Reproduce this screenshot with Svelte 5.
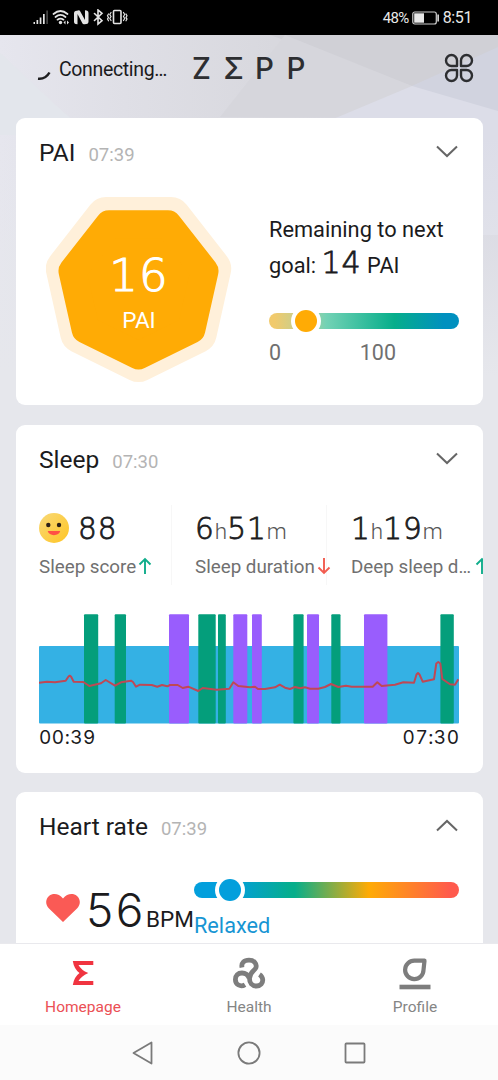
<script>
  const heptagonOuter = '92.5,165 150.8,136.2 165.2,71.7 124.9,20 60.1,20 19.8,71.7 34.2,136.2';
  const heptagonInner = '92.5,158.5 145.4,132.5 158.5,74.1 121.9,27.3 63.1,27.3 26.5,74.1 39.6,132.5';

  // sleep stages above light sleep, in chart units (420 wide)
  const stages = [
    { x: 45, w: 14.2, type: 'deep' },
    { x: 75.7, w: 11.3, type: 'deep' },
    { x: 130, w: 20, type: 'rem' },
    { x: 159.3, w: 17.4, type: 'deep' },
    { x: 179, w: 7.8, type: 'deep' },
    { x: 194.3, w: 14, type: 'rem' },
    { x: 213, w: 9.8, type: 'rem' },
    { x: 254.4, w: 10.2, type: 'deep' },
    { x: 268, w: 12, type: 'rem' },
    { x: 292.3, w: 9.2, type: 'deep' },
    { x: 325, w: 23.4, type: 'rem' },
    { x: 401.4, w: 13.4, type: 'deep' }
  ];

  const pulse = [
    [0, 68.7], [8, 67.7], [16, 68.3], [26.7, 66.7], [29.5, 62.5], [30.7, 61.7], [32, 62.5], [34.7, 67.7], [44.3, 68],
    [50.3, 72], [62, 69.3], [66.7, 66], [76, 71.7], [82, 68.3], [92, 66.7], [94, 68], [97, 72.7],
    [101, 70.7], [112.7, 71], [118.3, 72.7], [123, 71], [128.3, 72.3], [131, 71], [138.7, 71],
    [143.7, 74], [149.3, 72.7], [159.3, 77], [163.7, 74], [177.7, 75.7], [190.3, 74.7],
    [194.3, 68.3], [199.3, 72], [211, 73.3], [216, 72.7], [219, 75], [226, 75], [236, 73.3],
    [240.7, 70.7], [246, 73.7], [251, 75], [256, 73], [261, 74.3], [266, 73.3], [271, 74.7],
    [279.3, 74.7], [286, 73], [292, 70], [299.3, 73], [307, 71.7], [312.7, 72.7], [333.7, 72.7],
    [338.3, 68.3], [342.7, 72], [356, 70.7], [364.3, 68.3], [375, 68.7], [377.5, 60.5], [379, 59], [380.5, 60.5], [383.7, 67.7],
    [395, 65.3], [397.3, 49.5], [399.3, 48], [401.3, 49.5], [403.3, 65], [411, 70.3],
    [416, 70.7], [419.3, 65.3]
  ];
  const pulseLine = pulse.map((p) => p.join(',')).join(' ');
</script>

<div class="phone">
  <div class="status">
    <svg class="status-icons" width="98" height="18" viewBox="0 0 98 18">
      <g fill="#e4e4e4">
        <rect x="0.5" y="13" width="1.500" height="2" />
        <rect x="3.500" y="11" width="1.700" height="4" />
        <rect x="6.700" y="8.500" width="1.700" height="6.500" />
        <rect x="10" y="5" width="1.700" height="10" />
        <rect x="13.400" y="1.500" width="1.400" height="13.500" fill="#555" />
        <circle cx="27.500" cy="13.500" r="1.700" />
        <path d="M30.500 13.500l2-2v4zM36 13.500l-2-2v4z" />
        <path d="M45 1.500l-2.500.500q-1.500.300-1.500 2v9q0 1.700 1.500 2l2 .200V5l5 9.500q.500 1 2 .700 4 0 4-2.500V4q0-2.500-3.500-2.700V11L47 2q-.500-1-2-.500z" />
      </g>
      <g fill="none" stroke="#e4e4e4" stroke-width="1.700" stroke-linecap="round">
        <path d="M20.500 5Q27.500-1 34.500 5M22.500 8Q27.500 3.700 32.500 8M24.500 10.700Q27.500 8.500 30.500 10.700" />
        <path d="M61.500 4.500l7.500 7.200-4 3.300V1l4 3.300L61.500 11.500" stroke-width="1.600" />
        <rect x="80.500" y="1.500" width="7.500" height="13" rx="1" stroke-width="1.600" />
        <path d="M78 3.500l-1.200 2 1.200 2-1.200 2 1.200 2M75.500 5l-1 1.700 1 1.700-1 1.700 1 1.700M90.500 3.500l1.200 2-1.200 2 1.200 2-1.200 2M93 5l1 1.700-1 1.700 1 1.700-1 1.700" stroke-width="1.200" />
      </g>
    </svg>
    <div class="status-right">
      <span class="percent">48%</span>
      <svg width="28" height="14" viewBox="0 0 28 14">
        <rect x="0.800" y="1" width="23.500" height="12" rx="2" fill="none" stroke="#cfcfcf" stroke-width="1.200" />
        <rect x="2.200" y="2.300" width="9.800" height="9.400" fill="#e8e8e8" />
        <rect x="25.300" y="3.500" width="1.700" height="7" fill="#cfcfcf" />
      </svg>
      <span class="clock">8:51</span>
    </div>
  </div>

  <main>
    <svg class="backdrop" width="498" height="340" viewBox="0 0 498 340" preserveAspectRatio="none">
      <defs>
        <linearGradient id="sky" x1="0" x2="1">
          <stop offset="0" stop-color="#e6e6ee" />
          <stop offset="0.250" stop-color="#dfdfe6" />
          <stop offset="0.550" stop-color="#d8d8de" />
          <stop offset="1" stop-color="#d5d5df" />
        </linearGradient>
        <linearGradient id="fade" x1="0" y1="0" x2="0" y2="1">
          <stop offset="0.300" stop-color="#e6e7ec" stop-opacity="0" />
          <stop offset="1" stop-color="#e6e7ec" />
        </linearGradient>
      </defs>
      <rect width="498" height="340" fill="url(#sky)" />
      <polygon points="0,18 58,72 90,100 0,100" fill="#e3e6ec" />
      <polygon points="270,0 498,0 498,14 412,51" fill="#d0d0d6" />
      <polygon points="285,0 412,51 340,82 220,82" fill="#d6d6dc" />
      <polygon points="412,51 498,12 498,80" fill="#d1d3df" />
      <polygon points="412,51 498,76 498,200 200,200 200,140" fill="#dcdde8" />
      <rect width="498" height="340" fill="url(#fade)" />
    </svg>

    <header>
      <svg class="spinner" width="14" height="10" viewBox="0 0 14 10">
        <path d="M1 7.700Q8.500 8.500 12.500 1.500" fill="none" stroke="#1e1e20" stroke-width="2.500" />
      </svg>
      <span class="connecting">Connecting…</span>
      <div class="brand"><span>Z</span><span>Σ</span><span>P</span><span>P</span></div>
      <svg class="apps" width="30" height="30" viewBox="0 0 30 30" fill="none" stroke="#2d2e31" stroke-width="2.400" stroke-linejoin="round">
        <path d="M13 13V7.500A5.500 5.500 0 1 0 7.500 13Z" />
        <path d="M17 13V7.500A5.500 5.500 0 1 1 22.500 13Z" />
        <path d="M13 17V22.500A5.500 5.500 0 1 1 7.500 17Z" />
        <path d="M17 17V22.500A5.500 5.500 0 1 0 22.500 17Z" />
      </svg>
    </header>

    <section class="card pai">
      <div class="card-head">
        <h2>PAI</h2>
        <time>07:39</time>
        <svg class="chevron" width="22" height="13" viewBox="0 0 22 13"><path d="M1 1.500L11 11 21 1.500" /></svg>
      </div>
      <div class="pai-body">
        <div class="badge">
          <svg width="186" height="186" viewBox="0 0 186 186" stroke-linejoin="round">
            <polygon points={heptagonOuter} fill="#fff0da" stroke="#fff0da" stroke-width="40" />
            <polygon points={heptagonInner} fill="#ffab05" stroke="#ffab05" stroke-width="28" />
          </svg>
          <div class="badge-text">
            <strong>16</strong>
            <span>PAI</span>
          </div>
        </div>
        <div class="goal">
          <p>Remaining to next</p>
          <p>goal: <b>14</b> PAI</p>
          <div class="track pai-track"><i class="knob"></i></div>
          <div class="scale"><span>0</span><span>100</span></div>
        </div>
      </div>
    </section>

    <section class="card sleep">
      <div class="card-head">
        <h2>Sleep</h2>
        <time>07:30</time>
        <svg class="chevron" width="22" height="13" viewBox="0 0 22 13"><path d="M1 1.500L11 11 21 1.500" /></svg>
      </div>
      <div class="stats">
        <div class="stat">
          <div class="value">
            <svg class="smiley" width="30" height="30" viewBox="0 0 30 30">
              <defs>
                <linearGradient id="face" x1="0" y1="0" x2="1" y2="1">
                  <stop offset="0" stop-color="#f8d978" />
                  <stop offset="1" stop-color="#ffc524" />
                </linearGradient>
              </defs>
              <circle cx="15" cy="15" r="15" fill="url(#face)" />
              <circle cx="9.300" cy="12" r="2.200" fill="#2c2017" />
              <circle cx="20" cy="12" r="2.200" fill="#2c2017" />
              <path d="M8.700 18h12.500c-1 5.500-11.500 5.500-12.500 0z" fill="#ff5145" />
            </svg>
            <span class="num">88</span>
          </div>
          <div class="label">Sleep score<svg class="arrow" width="14" height="18" viewBox="0 0 14 18" stroke="#10ad8b"><path d="M7 17V2M1.500 7.500L7 2l5.500 5.500" /></svg></div>
        </div>
        <div class="stat">
          <div class="value"><span class="num">6</span><small>h</small><span class="num">51</span><small>m</small></div>
          <div class="label">Sleep duration<svg class="arrow" width="14" height="18" viewBox="0 0 14 18" stroke="#f25c50"><path d="M7 1v15M1.500 10.500L7 16l5.500-5.500" /></svg></div>
        </div>
        <div class="stat">
          <div class="value"><span class="num">1</span><small>h</small><span class="num">19</span><small>m</small></div>
          <div class="label">Deep sleep d…<svg class="arrow gap" width="14" height="18" viewBox="0 0 14 18" stroke="#10ad8b"><path d="M7 17V2M1.500 7.500L7 2l5.500 5.500" /></svg></div>
        </div>
      </div>
      <svg class="chart" width="420" height="110" viewBox="0 0 420 110">
        <rect y="32" width="420" height="77.500" rx="1" fill="#34b1e4" />
        {#each stages as s}
          <rect x={s.x} y="0.300" width={s.w} height="109.200" rx="1" fill={s.type === 'deep' ? '#049e7b' : '#995dfd'} />
        {/each}
        <polyline points={pulseLine} fill="none" stroke="#bf4855" stroke-width="2" stroke-linejoin="round" />
      </svg>
      <div class="range"><span>00:39</span><span>07:30</span></div>
    </section>

    <section class="card heart">
      <div class="card-head">
        <h2>Heart rate</h2>
        <time>07:39</time>
        <svg class="chevron" width="22" height="13" viewBox="0 0 22 13"><path d="M1 11.500L11 2l10 9.500" /></svg>
      </div>
      <div class="heart-body">
        <svg class="heart-icon" width="34" height="28" viewBox="0 0 34 28">
          <path d="M17 28L3 14.500C-1 10.500-.500 5 3 2 7-1.300 13-.500 17 4.500 21-.500 27-1.300 31 2c3.500 3 4 8.500 0 12.500z" fill="#fa5a55" />
        </svg>
        <span class="bpm">56</span><span class="unit">BPM</span>
        <div class="zone">
          <div class="track heart-track"><i class="knob"></i></div>
          <span>Relaxed</span>
        </div>
      </div>
    </section>
  </main>

  <nav class="tabs">
    <div class="tab active">
      <svg width="34" height="34" viewBox="0 0 34 34"><path d="M6.800 5H27.300V9H12.500Q15 14 22.300 17 15 20.500 12.500 25H27.300V29H6.800Q8 21 13.500 17 8 13 6.800 5z" fill="#f03440" /></svg>
      <span>Homepage</span>
    </div>
    <div class="tab">
      <svg width="34" height="34" viewBox="0 0 34 34" fill="none" stroke="#7d7d7d" stroke-width="4.800">
        <path d="M10 11.500C9 7 12 4.200 17 4.200 22 4.200 25 7.500 24 11.500 22.800 15 17.500 16 17.500 22.500 17.500 27 20 30 24.500 30 28.500 30 31 27 30.700 23.500 30.400 21 29 19.500 27.500 18.500" />
        <path d="M13 28.700C8.500 31.500 3.400 28.500 3.400 23.500 3.400 19.500 6 17 10 17 14 17 16 19 17.200 22" />
      </svg>
      <span>Health</span>
    </div>
    <div class="tab">
      <svg width="34" height="34" viewBox="0 0 34 34" fill="none" stroke="#7d7d7d">
        <path d="M26.500 4.700H16.500A9.200 9.200 0 1 0 25.500 14Z" stroke-width="4.200" stroke-linejoin="round" />
        <path d="M1.500 31H32.500" stroke-width="4.600" />
      </svg>
      <span>Profile</span>
    </div>
  </nav>

  <div class="sysnav">
    <svg width="22" height="24" viewBox="0 0 22 24"><path d="M19.500 1.500v21L1.500 12z" /></svg>
    <svg width="24" height="24" viewBox="0 0 24 24"><circle cx="12" cy="12" r="10.600" /></svg>
    <svg width="22" height="22" viewBox="0 0 22 22"><rect x="1.500" y="1.500" width="19" height="19" rx="0.800" /></svg>
  </div>
</div>

<style>
  :global(body) {
    background: #e6e7ec;
  }
  .phone {
    width: 498px;
    height: 1080px;
    display: flex;
    flex-direction: column;
    overflow: hidden;
    font-family: Roboto, sans-serif;
    color: #1b1b1d;
  }
  svg {
    display: block;
    flex: none;
  }
  .status {
    height: 35px;
    flex: none;
    box-sizing: border-box;
    padding: 0 26px 0 33px;
    background: #000;
    color: #e8e8e8;
    display: flex;
    align-items: center;
    justify-content: space-between;
  }
  .status-right {
    display: flex;
    align-items: center;
    gap: 3px;
    font-size: 16px;
    line-height: 18px;
    letter-spacing: -0.4px;
  }
  .percent {
    font-size: 15px;
    letter-spacing: -0.6px;
  }
  main {
    position: relative;
    height: 908px;
    flex: none;
    overflow: hidden;
    background: #e6e7ec;
  }
  .backdrop {
    position: absolute;
    top: 0;
    left: 0;
  }
  header {
    position: relative;
    height: 83px;
    box-sizing: border-box;
    padding: 0 24px 17px 37px;
    display: flex;
    align-items: center;
  }
  .spinner {
    margin-top: 16px;
  }
  .connecting {
    width: 133px;
    margin-left: 8px;
    margin-top: 3px;
    font-size: 19.500px;
    line-height: 24px;
    letter-spacing: -0.350px;
  }
  .brand {
    display: flex;
    font-family: Inter, sans-serif;
    font-weight: 550;
    font-size: 29.500px;
    line-height: 30px;
    color: #2d2e31;
  }
  .brand span {
    width: 31.500px;
  }
  .apps {
    margin-left: auto;
  }
  .card {
    position: relative;
    box-sizing: border-box;
    margin: 0 15.500px 20px;
    padding: 0 23.500px;
    background: #fff;
    border-radius: 9px;
  }
  .card-head {
    display: flex;
    align-items: baseline;
    height: 70px;
    line-height: 70px;
  }
  h2 {
    margin: 0;
    font-size: 24.500px;
    font-weight: 400;
  }
  time {
    margin-left: 13px;
    font-size: 18.500px;
    color: #b4b4b4;
  }
  .chevron {
    margin-left: auto;
    margin-right: 1px;
    align-self: center;
    margin-top: -3px;
    fill: none;
    stroke: #666;
    stroke-width: 2;
  }
  .pai {
    height: 287px;
  }
  .pai-body {
    display: flex;
    padding: 9px 0 0 7px;
  }
  .badge {
    display: grid;
  }
  .badge > * {
    grid-area: 1 / 1;
  }
  .badge-text {
    display: flex;
    flex-direction: column;
    align-items: center;
    padding-top: 54px;
    color: #fff;
  }
  .badge-text strong,
  .goal b,
  .num {
    font-family: "DejaVu Sans", sans-serif;
    font-weight: 200;
    -webkit-text-stroke: 0.800px currentColor;
  }
  .badge-text strong {
    font-size: 45px;
    line-height: 50px;
    letter-spacing: 1px;
    -webkit-text-stroke-width: 1.100px;
  }
  .badge-text span {
    font-size: 22.500px;
    line-height: 38px;
  }
  .goal {
    margin-left: 37px;
    width: 190px;
    padding-top: 15px;
  }
  .goal p {
    margin: 0;
    font-size: 21.800px;
    line-height: 36px;
    white-space: nowrap;
  }
  .goal b {
    font-size: 30px;
    line-height: 30px;
    letter-spacing: 1px;
  }
  .track {
    position: relative;
    height: 16px;
    border-radius: 8px;
  }
  .pai-track {
    margin-top: 29px;
    background: linear-gradient(90deg, #f1ca6c 3%, #bdd096 18%, #73d2b5 30%, #06ae8b 66%, #0090bf 92%);
  }
  .knob {
    position: absolute;
    top: -3px;
    left: 26px;
    width: 22px;
    height: 22px;
    border-radius: 50%;
    background: #ffab05;
    box-shadow: 0 0 0 4px #fff;
  }
  .scale {
    display: flex;
    justify-content: space-between;
    padding-right: 63px;
    margin-top: 12px;
    font-size: 21.500px;
    line-height: 24px;
    color: #707070;
  }
  .sleep {
    height: 348px;
    margin-bottom: 19px;
  }
  .stats {
    display: flex;
    width: 443.500px;
    height: 80px;
    margin-top: 10px;
    overflow: hidden;
  }
  .stat {
    width: 156px;
    flex: none;
    box-sizing: border-box;
    border-right: 1px solid #f7f7f7;
    padding-top: 5px;
  }
  .stat:first-child {
    width: 133px;
    margin-right: 23px;
  }
  .stat:nth-child(2) {
    width: 132px;
    margin-right: 24px;
  }
  .value {
    display: flex;
    align-items: baseline;
    height: 38px;
    line-height: 38px;
    white-space: nowrap;
  }
  .smiley {
    align-self: center;
    margin-right: 9px;
    margin-top: -3px;
  }
  .num {
    font-size: 29.500px;
    letter-spacing: 1px;
  }
  .value small {
    font-size: 22.500px;
    font-weight: 300;
    color: #555;
  }
  .label {
    display: flex;
    align-items: center;
    height: 38px;
    font-size: 18.800px;
    line-height: 24px;
    white-space: nowrap;
    color: #707070;
  }
  .arrow {
    margin-left: 2px;
    margin-top: -3px;
    fill: none;
    stroke-width: 1.900;
  }
  .arrow.gap {
    margin-left: 4px;
  }
  .stat:nth-child(2) .label {
    margin-right: -10px;
  }
  .chart {
    margin-top: 29px;
  }
  .range {
    display: flex;
    justify-content: space-between;
    margin-right: -0.500px;
    font-family: Inter, sans-serif;
    font-size: 19px;
    line-height: 28px;
    letter-spacing: 0.500px;
    font-variant-numeric: tabular-nums;
  }
  .heart {
    height: 200px;
  }
  .heart-body {
    display: flex;
    align-items: flex-start;
    padding: 20px 0 0 7px;
  }
  .heart-icon {
    margin-top: 12px;
  }
  .bpm {
    margin-left: 6px;
    font-family: Inter, sans-serif;
    font-weight: 300;
    font-size: 46px;
    line-height: 56px;
    letter-spacing: 2.500px;
  }
  .unit {
    font-size: 22.500px;
    line-height: 74px;
  }
  .zone {
    width: 265px;
    margin-left: auto;
  }
  .heart-track {
    background: linear-gradient(90deg, #039fdc 15%, #06ae8b 37%, #06ae8b 38%, #ffab05 66%, #ff5a4d 97%);
  }
  .heart-track .knob {
    left: 25px;
    background: #039fdc;
  }
  .zone span {
    display: block;
    margin-top: 15px;
    font-size: 21.700px;
    line-height: 26px;
    color: #1795d3;
  }
  .tabs {
    display: flex;
    height: 82px;
    flex: none;
    box-sizing: border-box;
    border-top: 1px solid #e9e9ed;
    background: #fff;
  }
  .tab {
    flex: 1;
    display: flex;
    flex-direction: column;
    align-items: center;
    padding-top: 12px;
    font-size: 15.500px;
    line-height: 20px;
    color: #858585;
  }
  .tab span {
    margin-top: 7px;
  }
  .tab.active {
    color: #eb5055;
  }
  .sysnav {
    display: flex;
    justify-content: center;
    align-items: center;
    gap: 83px;
    flex: 1;
    background: #fbfbfb;
  }
  .sysnav svg {
    fill: none;
    stroke: #7a7a7a;
    stroke-width: 1.800;
    stroke-linejoin: round;
  }
</style>
